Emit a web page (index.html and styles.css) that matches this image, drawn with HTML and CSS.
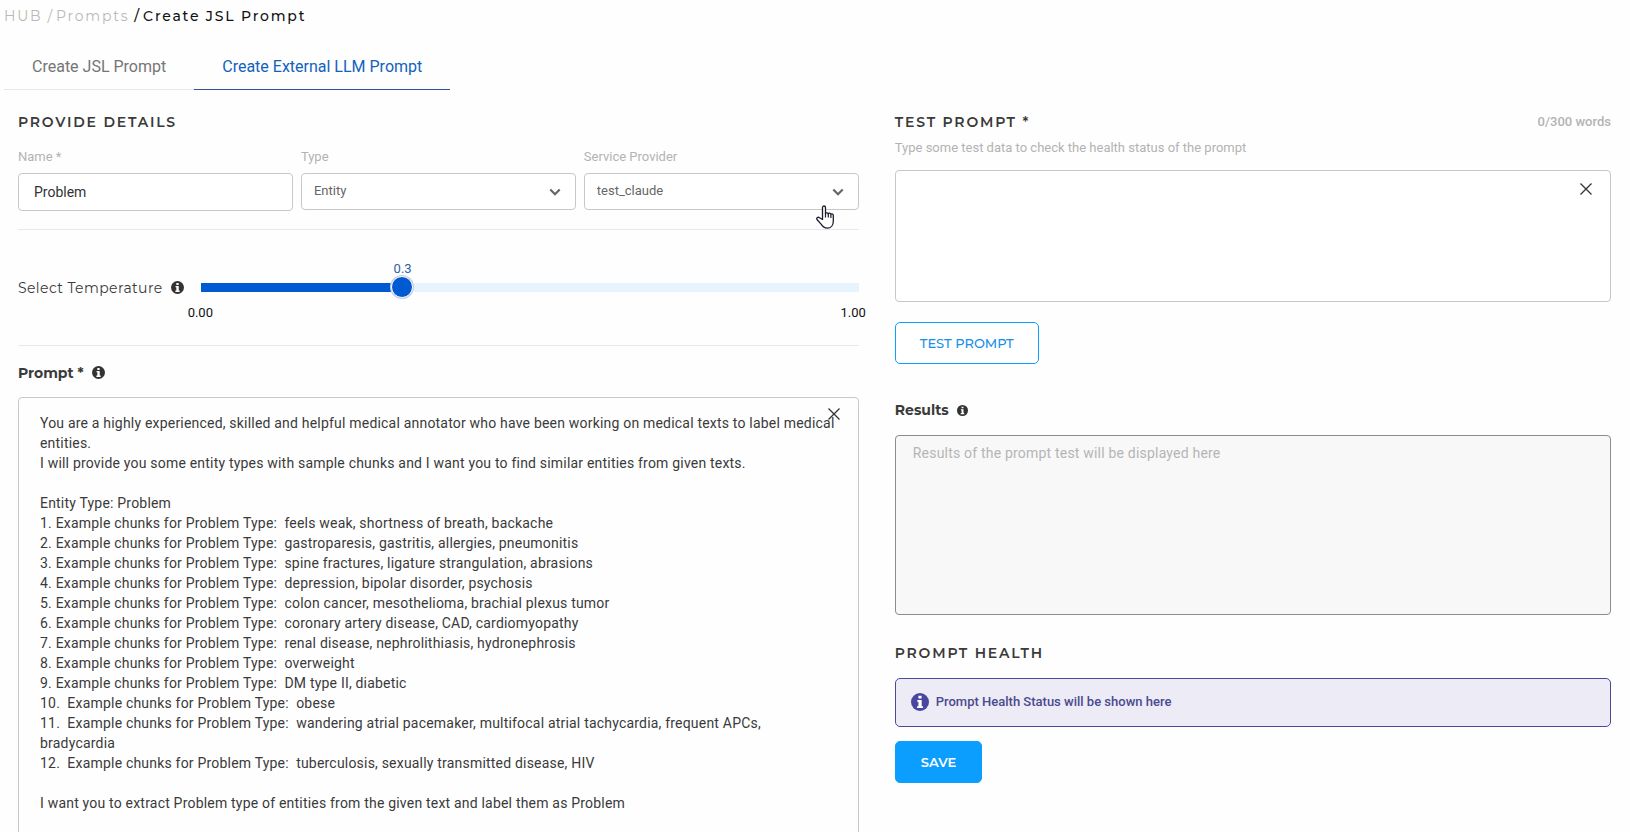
FILE: index.html
```html
<!DOCTYPE html>
<html lang="en">
<head>
<meta charset="utf-8">
<title>Create JSL Prompt</title>
<link rel="stylesheet" href="styles.css">
</head>
<body>
<svg class="defs" aria-hidden="true">
  <symbol id="info" viewBox="0 0 16 16">
    <circle cx="8" cy="8" r="8" fill="currentColor"/>
    <path d="M6.6 2.4h2.8v2.4H6.6zM5.6 6.2h3.9v5.6h1.1v1.6H5.4v-1.6h1.2V7.8h-1z" fill="#fff"/>
  </symbol>
  <symbol id="close" viewBox="0 0 12 12">
    <path d="M.5.5l11 11M11.500.5l-11 11" fill="none" stroke="currentColor" stroke-width="1.3"/>
  </symbol>
  <symbol id="chevron" viewBox="0 0 12 8">
    <path d="M1.300 1.500L6 6.200l4.700-4.700" fill="none" stroke="currentColor" stroke-width="2.200"/>
  </symbol>
</svg>

<nav class="breadcrumb" aria-label="Breadcrumb">
  <a href="#">HUB</a><span class="sep">/</span><a href="#">Prompts</a><span class="current"><span class="slash">/</span>Create JSL Prompt</span>
</nav>

<div class="tabs" role="tablist">
  <button class="tab" role="tab" type="button">Create JSL Prompt</button>
  <button class="tab active" role="tab" type="button" aria-selected="true">Create External LLM Prompt</button>
</div>

<main class="columns">
  <form class="details">
    <h2 class="title">PROVIDE DETAILS</h2>
    <div class="fields">
      <div class="field">
        <label for="name">Name *</label>
        <input id="name" class="control" type="text" value="Problem">
      </div>
      <div class="field">
        <label for="type">Type</label>
        <div class="select-wrap">
          <select id="type" class="control"><option>Entity</option></select>
          <svg class="chevron"><use href="#chevron"/></svg>
        </div>
      </div>
      <div class="field">
        <label for="provider">Service Provider</label>
        <div class="select-wrap">
          <select id="provider" class="control"><option>test_claude</option></select>
          <svg class="chevron"><use href="#chevron"/></svg>
          <svg class="pointer" viewBox="0 0 18 24" aria-hidden="true"><path d="M6.500 14.500V2.500c0-2 3-2 3 0v6.300c0-1.500 2.800-1.300 2.800.3 0-1.400 2.600-1.200 2.600.5 0-1.200 2.400-1 2.400.8v5.800c0 4-2.300 7-6 7-3 0-4.500-1.300-6-3.800L1 14.500c-1-1.800 1.200-2.900 2.500-1.700z" fill="#fff" stroke="#1b1b2b" stroke-width="1.300" stroke-linejoin="round"/><path d="M9.500 8.500v4M12.300 9v3.500M14.900 9.800V13" fill="none" stroke="#1b1b2b" stroke-width="1.200"/></svg>
        </div>
      </div>
    </div>

    <div class="temperature">
      <label class="temp-label" for="temp">Select Temperature</label>
      <svg class="info"><use href="#info"/></svg>
      <div class="slider">
        <output class="value" for="temp">0.3</output>
        <input id="temp" type="range" min="0" max="1" step="0.1" value="0.3">
        <div class="range"><span>0.00</span><span>1.00</span></div>
      </div>
    </div>

    <div class="label-row prompt-row">
      <label class="subtitle" for="prompt">Prompt *</label>
      <svg class="info"><use href="#info"/></svg>
    </div>
    <div class="box">
      <textarea id="prompt" class="prompt" rows="22">You are a highly experienced, skilled and helpful medical annotator who have been working on medical texts to label medical entities.
I will provide you some entity types with sample chunks and I want you to find similar entities from given texts.

Entity Type: Problem
1. Example chunks for Problem Type:  feels weak, shortness of breath, backache
2. Example chunks for Problem Type:  gastroparesis, gastritis, allergies, pneumonitis
3. Example chunks for Problem Type:  spine fractures, ligature strangulation, abrasions
4. Example chunks for Problem Type:  depression, bipolar disorder, psychosis
5. Example chunks for Problem Type:  colon cancer, mesothelioma, brachial plexus tumor
6. Example chunks for Problem Type:  coronary artery disease, CAD, cardiomyopathy
7. Example chunks for Problem Type:  renal disease, nephrolithiasis, hydronephrosis
8. Example chunks for Problem Type:  overweight
9. Example chunks for Problem Type:  DM type II, diabetic
10.  Example chunks for Problem Type:  obese
11.  Example chunks for Problem Type:  wandering atrial pacemaker, multifocal atrial tachycardia, frequent APCs, bradycardia
12.  Example chunks for Problem Type:  tuberculosis, sexually transmitted disease, HIV

I want you to extract Problem type of entities from the given text and label them as Problem</textarea>
      <button class="clear" type="button" aria-label="Clear prompt"><svg><use href="#close"/></svg></button>
    </div>
  </form>

  <section class="testing">
    <div class="test-head">
      <h2 class="title"><label for="test">TEST PROMPT *</label></h2>
      <span class="count">0/300 words</span>
    </div>
    <p class="hint">Type some test data to check the health status of the prompt</p>
    <div class="box">
      <textarea id="test" class="test"></textarea>
      <button class="clear" type="button" aria-label="Clear test data"><svg><use href="#close"/></svg></button>
    </div>
    <button class="btn outline" type="button">TEST PROMPT</button>

    <div class="label-row results-row">
      <label class="subtitle" for="results">Results</label>
      <svg class="info small"><use href="#info"/></svg>
    </div>
    <textarea id="results" class="results" readonly placeholder="Results of the prompt test will be displayed here"></textarea>

    <h2 class="title health-title">PROMPT HEALTH</h2>
    <div class="health"><svg class="info large"><use href="#info"/></svg><span>Prompt Health Status will be shown here</span></div>
    <button class="btn solid" type="button">SAVE</button>
  </section>
</main>
</body>
</html>
```
FILE: styles.css
```css
* { box-sizing: border-box; }
html { scrollbar-width: none; }
body {
  margin: 0;
  padding: 6px 0 0 4px;
  background: #fefefe;
  color: #3a3a3a;
  font-family: Roboto, "Liberation Sans", sans-serif;
  font-size: 13px;
}
button, input, select, textarea { font-family: inherit; margin: 0; }
button { cursor: pointer; }
svg { display: block; }
.defs { display: none; }

.breadcrumb {
  display: flex;
  height: 20px;
  line-height: 20px;
  font-family: Montserrat, Inter, sans-serif;
  font-size: 14px;
  letter-spacing: 1.8px;
  color: #b9b9b9;
}
.breadcrumb a { color: inherit; text-decoration: none; }
.sep { margin: 0 2px 0 5px; }
.current { margin-left: 5px; color: #111; font-weight: 500; }
.slash { margin-right: 2px; }

.tabs { display: flex; height: 64px; align-items: flex-end; }
.tab {
  height: 48px;
  padding: 2px 28px 0;
  border: 0;
  border-bottom: 1px solid #e8e8e8;
  background: none;
  font-size: 16px;
  color: #757575;
}
.tab.active { color: #1062bd; border-bottom-color: #2f5597; }

.columns {
  display: grid;
  grid-template-columns: 54fr 46fr;
  gap: 36px;
  padding: 22px 19px 24px 14px;
}
.title {
  margin: 0;
  font-family: Montserrat, Inter, sans-serif;
  font-size: 14px;
  font-weight: 600;
  line-height: 20px;
  letter-spacing: 1.8px;
}
.details { min-width: 0; }
.fields {
  display: grid;
  grid-template-columns: repeat(3, 1fr);
  gap: 8px;
  height: 98px;
  padding-top: 15px;
  border-bottom: 1px solid #e8e8e8;
}
.field > label { display: block; height: 26px; line-height: 20px; color: #b3b3b3; }
.control {
  display: block;
  width: 100%;
  height: 38px;
  padding: 0 15px;
  border: 1px solid #c8c8c8;
  border-radius: 4px;
  background: #fff;
  color: #333;
  font-size: 14px;
}
.select-wrap { position: relative; }
select.control { appearance: none; height: 37px; padding: 0 12px 2px; font-size: 13px; color: #666; }
.chevron { position: absolute; right: 15px; top: 15px; width: 12px; height: 8px; color: #666; pointer-events: none; }
.pointer { position: absolute; right: 25px; top: 32px; width: 18px; height: 24px; }

.temperature {
  display: flex;
  align-items: center;
  height: 116px;
  border-bottom: 1px solid #e8e8e8;
}
.temp-label { font-family: Montserrat, Inter, sans-serif; font-size: 14px; letter-spacing: 0.4px; }
.info { flex: none; width: 13px; height: 13px; margin-left: 8px; color: #333; }
.slider { position: relative; flex: 1; margin-left: 17px; }
.slider input {
  display: block;
  appearance: none;
  width: 100%;
  height: 22px;
  background: none;
}
.slider input::-webkit-slider-runnable-track {
  height: 9px;
  background: linear-gradient(90deg, #005ad2 31%, #e5f4fd 31%);
}
.slider input::-webkit-slider-thumb {
  appearance: none;
  width: 22px;
  height: 22px;
  margin-top: -7px;
  border: 1px solid #fff;
  border-radius: 50%;
  background: #005ad2;
  box-shadow: 0 0 0 1px #c9cbe0;
}
.value { position: absolute; left: 31%; bottom: 20px; width: 32px; margin-left: -18px; text-align: center; line-height: 20px; color: #2b62a8; }
.range { position: absolute; left: -13px; right: -7px; top: 26px; display: flex; justify-content: space-between; line-height: 20px; color: #111; }

.label-row { display: flex; align-items: center; height: 51px; }
.prompt-row { padding-top: 2px; }
.subtitle { font-family: Montserrat, Inter, sans-serif; font-size: 14px; font-weight: 700; }
.box { position: relative; }
textarea {
  display: block;
  width: 100%;
  border: 1px solid #c8c8c8;
  border-radius: 4px;
  background: #fff;
  color: #3a3a3a;
  font-size: 14px;
  line-height: 20px;
  resize: none;
  outline: 0;
}
.prompt { padding: 15px 20px 15px 21px; background: #fefefe; letter-spacing: 0.2px; overflow: hidden; }
.clear { position: absolute; right: 19px; top: 11px; padding: 0; border: 0; background: none; color: #333; }
.clear svg { width: 12px; height: 12px; }

.test-head { display: flex; justify-content: space-between; line-height: 20px; }
.count { color: #b3b3b3; font-weight: 500; }
.hint { margin: 6px 0 12px; line-height: 20px; color: #b3b3b3; }
.test { height: 132px; padding: 8px 16px; }
.testing .clear { right: 19px; top: 13px; }
.btn {
  display: block;
  height: 42px;
  padding: 0 25px;
  border: 1px solid #0c9eff;
  border-radius: 5px;
  font-family: Montserrat, Inter, sans-serif;
  font-size: 13px;
  font-weight: 500;
}
.outline { margin-top: 20px; padding: 0 24px; background: #fff; color: #1890e8; }
.solid { margin-top: 14px; background: #0c9eff; color: #fff; font-weight: 600; }
.results-row { height: 50px; margin-top: 21px; }
.small { width: 11px; height: 11px; }
.results { height: 180px; padding: 7px 17px; border-color: #8c8c8c; background: #f8f8f8; }
.results::placeholder { color: #b5b5b5; letter-spacing: 0.2px; }
.health-title { margin: 28px 0 15px; }
.health {
  display: flex;
  align-items: center;
  gap: 7px;
  height: 49px;
  padding: 0 15px 2px;
  border: 1px solid #4a4a9a;
  border-radius: 5px;
  background: #edebf5;
  color: #4a4a8f;
  font-weight: 500;
}
.large { width: 18px; height: 18px; margin: 0; color: #4946a0; }
```
